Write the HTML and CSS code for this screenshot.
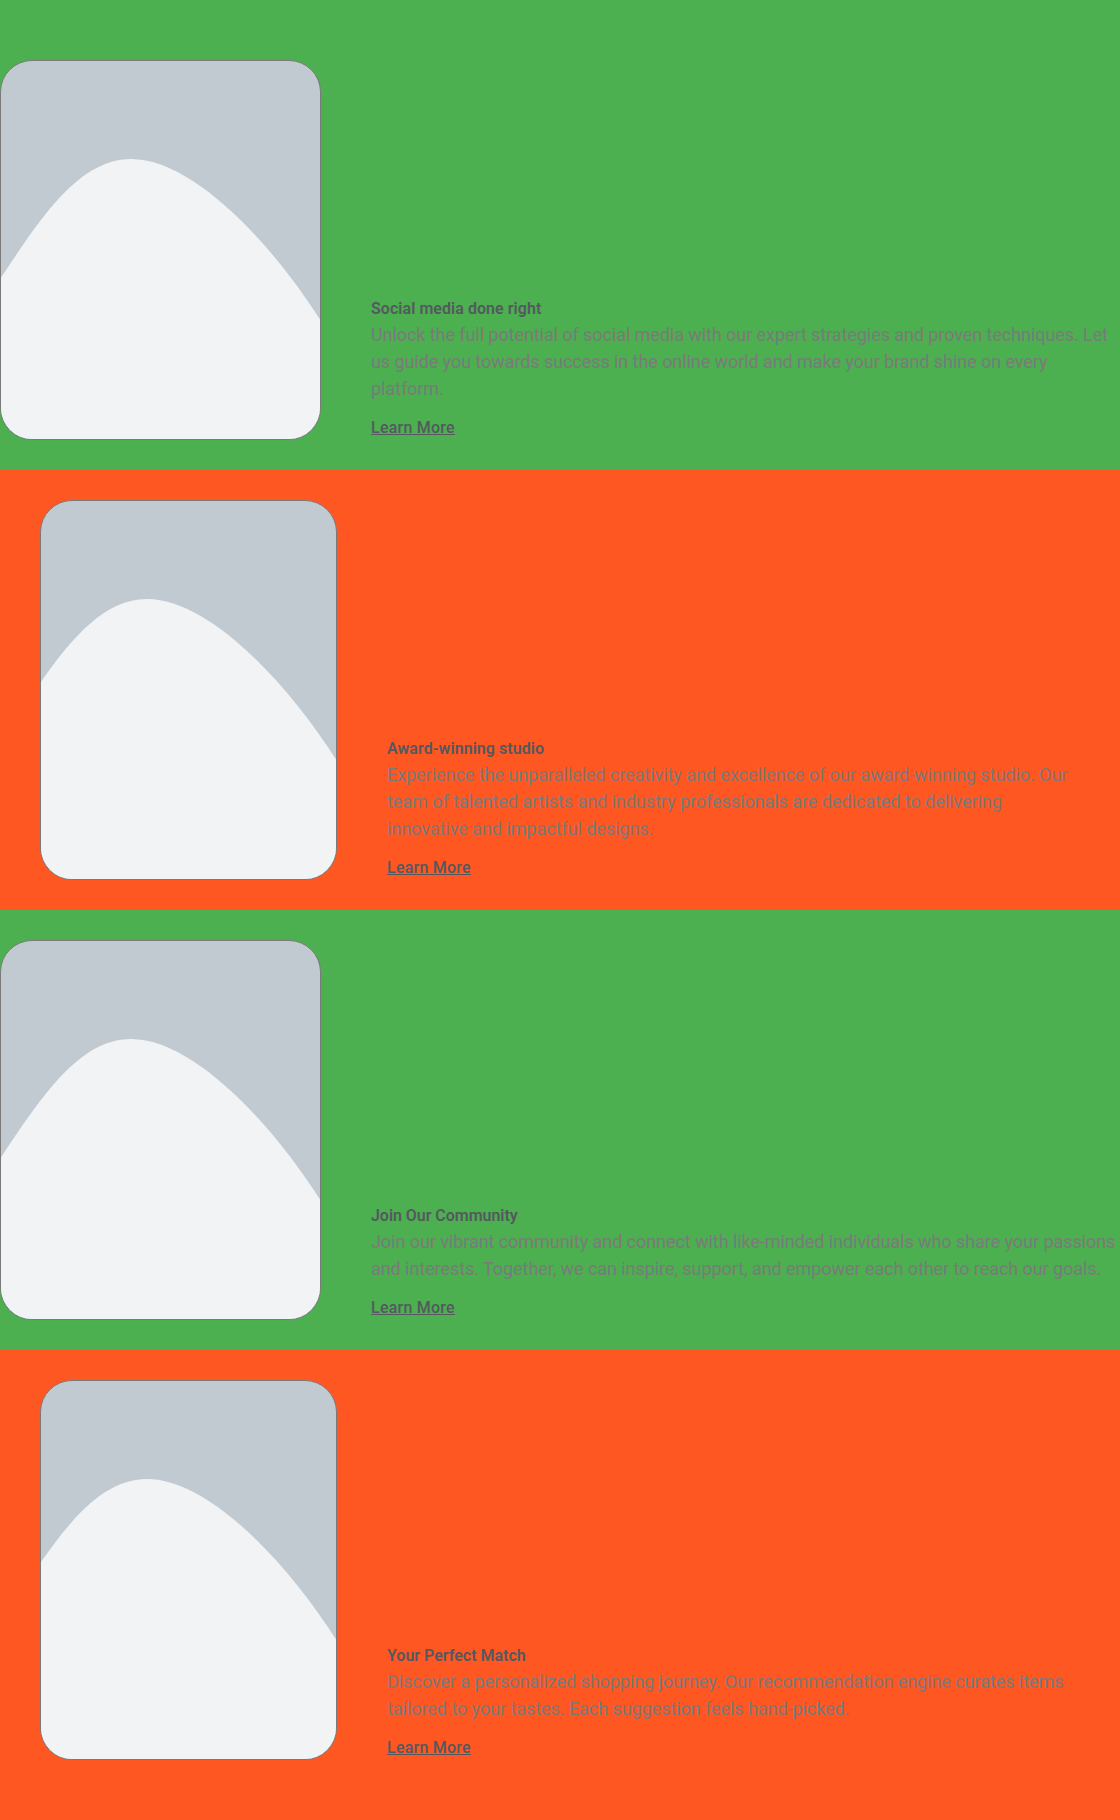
FILE: index.html
```
<!DOCTYPE html>
<html lang="en">
<head>
<meta charset="utf-8">
<title>Services</title>
<link rel="stylesheet" href="styles.css">
</head>
<body>
<svg class="defs" width="0" height="0"><symbol id="hill" viewBox="0 0 319 378"><path d="M0 216.5 C40 156.5 78 98 130 98 C192 98 270 181.5 319 258.5 V378 H0Z"/></symbol></svg>
<main class="features">
<section class="row green social">
<div class="media"><svg viewBox="0 0 319 378" preserveAspectRatio="xMaxYMid slice"><use href="#hill" width="319" height="378"/></svg></div>
<div class="copy"><h2>Social media done right</h2><p>Unlock the full potential of social media with our expert strategies and proven techniques. Let us guide you towards success in the online world and make your brand shine on every platform.</p><a href="#">Learn More</a></div>
</section>
<section class="row orange studio">
<div class="media"><svg viewBox="0 0 319 378" preserveAspectRatio="xMaxYMid slice"><use href="#hill" width="319" height="378"/></svg></div>
<div class="copy"><h2>Award-winning studio</h2><p>Experience the unparalleled creativity and excellence of our award-winning studio. Our team of talented artists and industry professionals are dedicated to delivering innovative and impactful designs.</p><a href="#">Learn More</a></div>
</section>
<section class="row green community">
<div class="media"><svg viewBox="0 0 319 378" preserveAspectRatio="xMaxYMid slice"><use href="#hill" width="319" height="378"/></svg></div>
<div class="copy"><h2>Join Our Community</h2><p>Join our vibrant community and connect with like-minded individuals who share your passions and interests. Together, we can inspire, support, and empower each other to reach our goals.</p><a href="#">Learn More</a></div>
</section>
<section class="row orange match">
<div class="media"><svg viewBox="0 0 319 378" preserveAspectRatio="xMaxYMid slice"><use href="#hill" width="319" height="378"/></svg></div>
<div class="copy"><h2>Your Perfect Match</h2><p>Discover a personalized shopping journey. Our recommendation engine curates items tailored to your tastes. Each suggestion feels hand-picked.</p><a href="#">Learn More</a></div>
</section>
</main>
</body>
</html>
```
FILE: styles.css
```
body { margin: 0; font-family: Roboto, sans-serif; }
.defs { display: block; }
.row { box-sizing: border-box; height: 440px; display: flex; gap: 50px; padding: 30px 0; }
.row:first-child { height: 470px; padding-top: 60px; }
.row:last-child { height: 470px; padding-bottom: 60px; }
.green { background: #4caf50; }
.orange { background: #ff5722; padding-left: 40px; padding-right: 40px; }
.media { box-sizing: border-box; flex: none; width: 321px; height: 380px; border: 1px solid #7a7a7a; border-radius: 32px; overflow: hidden; background: #c2cad1; }
.orange .media { width: 297px; }
.media svg { display: block; width: 100%; height: 100%; fill: #f1f3f5; }
.copy { align-self: flex-end; flex: 1; }
h2 { margin: 0; font-size: 16px; line-height: 24px; font-weight: 600; color: #54595f; }
p { margin: 0 0 14px; font-size: 18px; line-height: 27px; color: #7a7a7a; letter-spacing: -0.07px; }
a { display: block; font-size: 16px; line-height: 24px; font-weight: 500; color: #54595f; letter-spacing: 0.24px; }
.social h2, .studio h2 { letter-spacing: 0.05px; }
.community h2 { letter-spacing: -0.04px; }
.studio p { letter-spacing: -0.048px; }
.community p { letter-spacing: -0.06px; }
.match p { letter-spacing: -0.055px; }
```
